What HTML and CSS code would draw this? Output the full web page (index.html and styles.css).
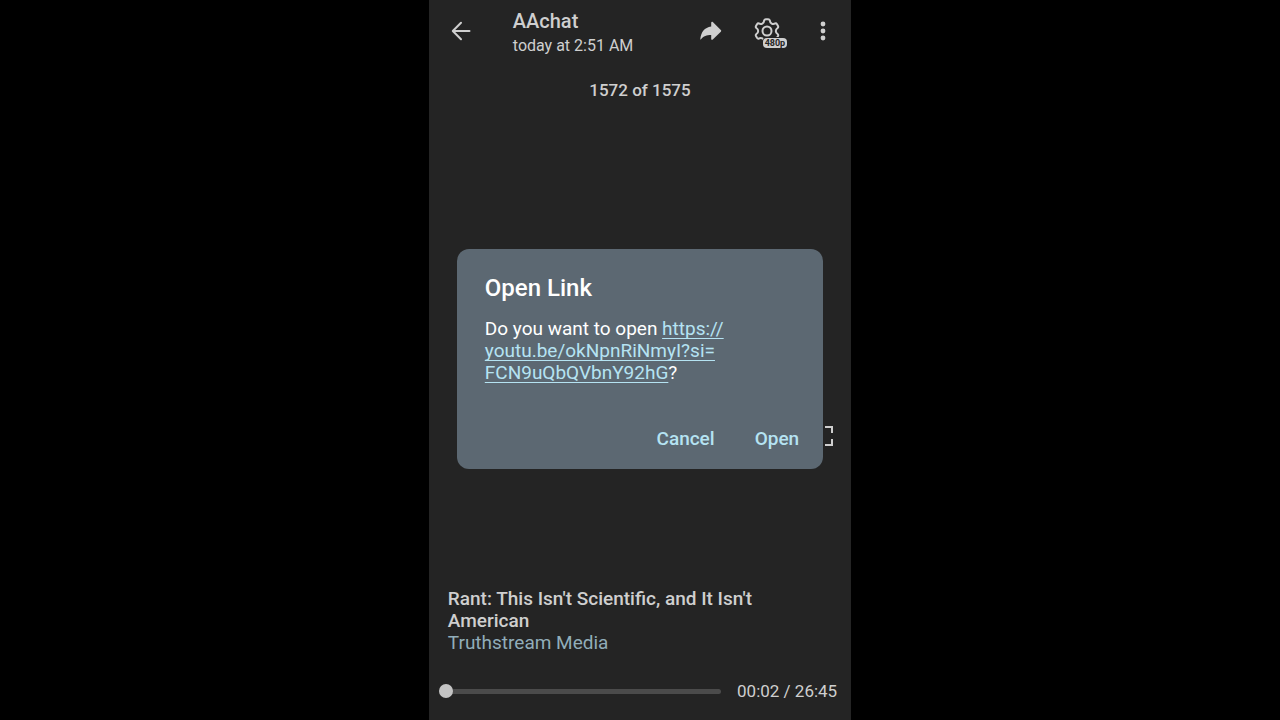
FILE: index.html
```html
<!DOCTYPE html>
<html lang="en">
<head>
    <meta charset="UTF-8">
    <meta name="viewport" content="width=device-width, initial-scale=1.0">
    <title>AAchat</title>
    <link rel="stylesheet" href="styles.css">
</head>
<body>
    <main class="viewer">
        <header class="top-bar">
            <button class="icon-btn back-btn" type="button" aria-label="Back">
                <svg width="20" height="20" viewBox="0 0 20 20" fill="none" stroke="currentColor" stroke-width="2" stroke-linecap="round" stroke-linejoin="round">
                    <path d="M18.5 10H2M10 1.8L1.8 10l8.2 8.2"/>
                </svg>
            </button>
            <div class="chat-info">
                <h1 class="chat-name">AAchat</h1>
                <p class="chat-date">today at 2:51 AM</p>
            </div>
            <button class="icon-btn" type="button" aria-label="Share">
                <svg width="22" height="20" viewBox="0 0 22 20" fill="currentColor">
                    <path d="M11.2 1.8c0-1 .9-1.3 1.6-.7l8 7.9c.6.6.6 1.1 0 1.7l-8 7.8c-.7.7-1.6.3-1.6-.6V14C6.6 14 3.4 15 1 18.3c-.3.4-.8.3-.7-.3C.9 11.2 4.5 6.3 11.2 5.4z"/>
                </svg>
            </button>
            <button class="icon-btn" type="button" aria-label="Quality 480p">
                <svg width="26" height="26" viewBox="0 0 26 26" fill="none" stroke="currentColor" stroke-width="2" stroke-linejoin="round">
                    <path d="M10.2 2.4Q10.6 1.2 11.8 1.2H14.2Q15.4 1.2 15.8 2.4C16 5.4 18.8 6.8 21.2 5.4Q22.2 5 23 6.2L24 8Q24.6 9.2 23.6 10C21.2 11.6 21.2 14.4 23.6 16Q24.6 16.8 24 18L23 19.8Q22.2 21 21.2 20.6C18.8 19.2 16 20.6 15.8 23.6Q15.4 24.8 14.2 24.8H11.8Q10.6 24.8 10.2 23.6C10 20.6 7.2 19.2 4.8 20.6Q3.8 21 3 19.8L2 18Q1.4 16.8 2.4 16C4.8 14.4 4.8 11.6 2.4 10Q1.4 9.2 2 8L3 6.2Q3.8 5 4.8 5.4C7.2 6.8 10 5.4 10.2 2.4z"/>
                    <circle cx="13" cy="13" r="4.5"/>
                </svg>
                <span class="quality-badge">480p</span>
            </button>
            <button class="icon-btn" type="button" aria-label="More options">
                <svg width="6" height="20" viewBox="0 0 6 20" fill="currentColor">
                    <circle cx="3" cy="3" r="2.4"/>
                    <circle cx="3" cy="10" r="2.4"/>
                    <circle cx="3" cy="17" r="2.4"/>
                </svg>
            </button>
        </header>

        <p class="counter">1572 of 1575</p>

        <div class="stage">
            <button class="fullscreen-btn" type="button" aria-label="Full screen">
                <svg width="20" height="20" viewBox="0 0 20 20" fill="none" stroke="currentColor" stroke-width="2">
                    <path d="M1 7V1h6M12 1h7v6M19 13v6h-7M7 19H1v-6"/>
                </svg>
            </button>
        </div>

        <section class="caption">
            <h2 class="caption-title">Rant: This Isn't Scientific, and It Isn't American</h2>
            <a class="caption-channel" href="#">Truthstream Media</a>
        </section>

        <footer class="player">
            <input class="seek" type="range" min="0" max="1605" value="2" aria-label="Seek">
            <span class="time">00:02 / 26:45</span>
        </footer>

        <div class="overlay">
            <div class="dialog" role="dialog" aria-labelledby="dialogTitle">
                <h2 class="dialog-title" id="dialogTitle">Open Link</h2>
                <p class="dialog-text">Do you want to open <a href="https://youtu.be/okNpnRiNmyI?si=FCN9uQbQVbnY92hG">https://<wbr>youtu.be/okNpnRiNmyI?si=<wbr>FCN9uQbQVbnY92hG</a>?</p>
                <div class="dialog-actions">
                    <button class="dialog-btn" type="button">Cancel</button>
                    <button class="dialog-btn" type="button">Open</button>
                </div>
            </div>
        </div>
    </main>
</body>
</html>
```
FILE: styles.css
```css
:root {
    --panel-color: #242424;
    --dialog-color: #5c6872;
    --text-color: #cfcfcf;
    --link-color: #b5e3f2;
    --channel-color: #91adb9;
    --track-color: #4b4b4b;
}

* {
    margin: 0;
    padding: 0;
    box-sizing: border-box;
    font-family: Roboto, sans-serif;
}

body {
    background-color: #000;
    color: var(--text-color);
}

button {
    border: none;
    background: none;
    color: inherit;
    cursor: pointer;
}

.viewer {
    position: relative;
    display: flex;
    flex-direction: column;
    width: 33%;
    min-width: 360px;
    min-height: 100vh;
    margin: 0 auto;
    background-color: var(--panel-color);
}

/* Top bar */
.top-bar {
    display: flex;
    align-items: flex-start;
    padding-top: 6px;
}

.icon-btn {
    position: relative;
    display: flex;
    align-items: center;
    justify-content: center;
    width: 56px;
    height: 50px;
}

.back-btn {
    width: 64px;
}

.chat-info {
    flex: 1;
    padding-left: 20px;
}

.chat-name {
    font-size: 20px;
    font-weight: 500;
    line-height: 30px;
}

.chat-date {
    font-size: 16px;
    line-height: 20px;
}

.quality-badge {
    position: absolute;
    right: 8px;
    bottom: 8px;
    padding: 0 2px;
    border-radius: 4px;
    background-color: var(--text-color);
    box-shadow: 0 0 0 1px var(--panel-color);
    color: var(--panel-color);
    font-size: 9px;
    font-weight: 700;
    line-height: 10px;
}

.counter {
    padding-top: 22px;
    font-size: 17px;
    font-weight: 500;
    line-height: 24px;
    text-align: center;
}

.stage {
    display: flex;
    flex: 1;
    align-items: flex-end;
    justify-content: flex-end;
    padding: 0 12px 136px;
}

.fullscreen-btn {
    display: flex;
    align-items: center;
    justify-content: center;
    width: 32px;
    height: 32px;
}

/* Caption and player */
.caption {
    padding: 0 19px;
    font-size: 19px;
    line-height: 22px;
}

.caption-title {
    font-size: inherit;
    font-weight: 500;
}

.caption-channel {
    color: var(--channel-color);
    text-decoration: none;
}

.player {
    display: flex;
    align-items: center;
    gap: 16px;
    padding: 25px 14px 17px 10px;
}

.seek {
    flex: 1;
    min-width: 0;
    height: 14px;
    appearance: none;
    background: none;
}

.seek::-webkit-slider-runnable-track {
    height: 5px;
    border-radius: 3px;
    background-color: var(--track-color);
}

.seek::-webkit-slider-thumb {
    appearance: none;
    width: 14px;
    height: 14px;
    margin-top: -5px;
    border-radius: 50%;
    background-color: #c4c4c4;
}

.time {
    font-size: 17px;
    line-height: 24px;
}

/* Dialog */
.overlay {
    position: absolute;
    inset: 0;
    display: flex;
    align-items: center;
    justify-content: center;
    padding: 0 28px 2px;
}

.dialog {
    width: 100%;
    padding: 23px 12px 12px 28px;
    border-radius: 12px;
    background-color: var(--dialog-color);
    color: #fff;
}

.dialog-title {
    margin-bottom: 14px;
    font-size: 24px;
    font-weight: 500;
    line-height: 32px;
}

.dialog-text {
    padding-right: 48px;
    font-size: 19px;
    line-height: 22px;
}

.dialog-text a {
    color: var(--link-color);
    text-decoration-thickness: 1px;
    text-underline-offset: 3px;
    text-decoration-skip-ink: none;
}

.dialog-actions {
    display: flex;
    justify-content: flex-end;
    gap: 16px;
    margin-top: 37px;
}

.dialog-btn {
    padding: 0 12px;
    color: var(--link-color);
    font-size: 19px;
    font-weight: 500;
    line-height: 36px;
}
```
